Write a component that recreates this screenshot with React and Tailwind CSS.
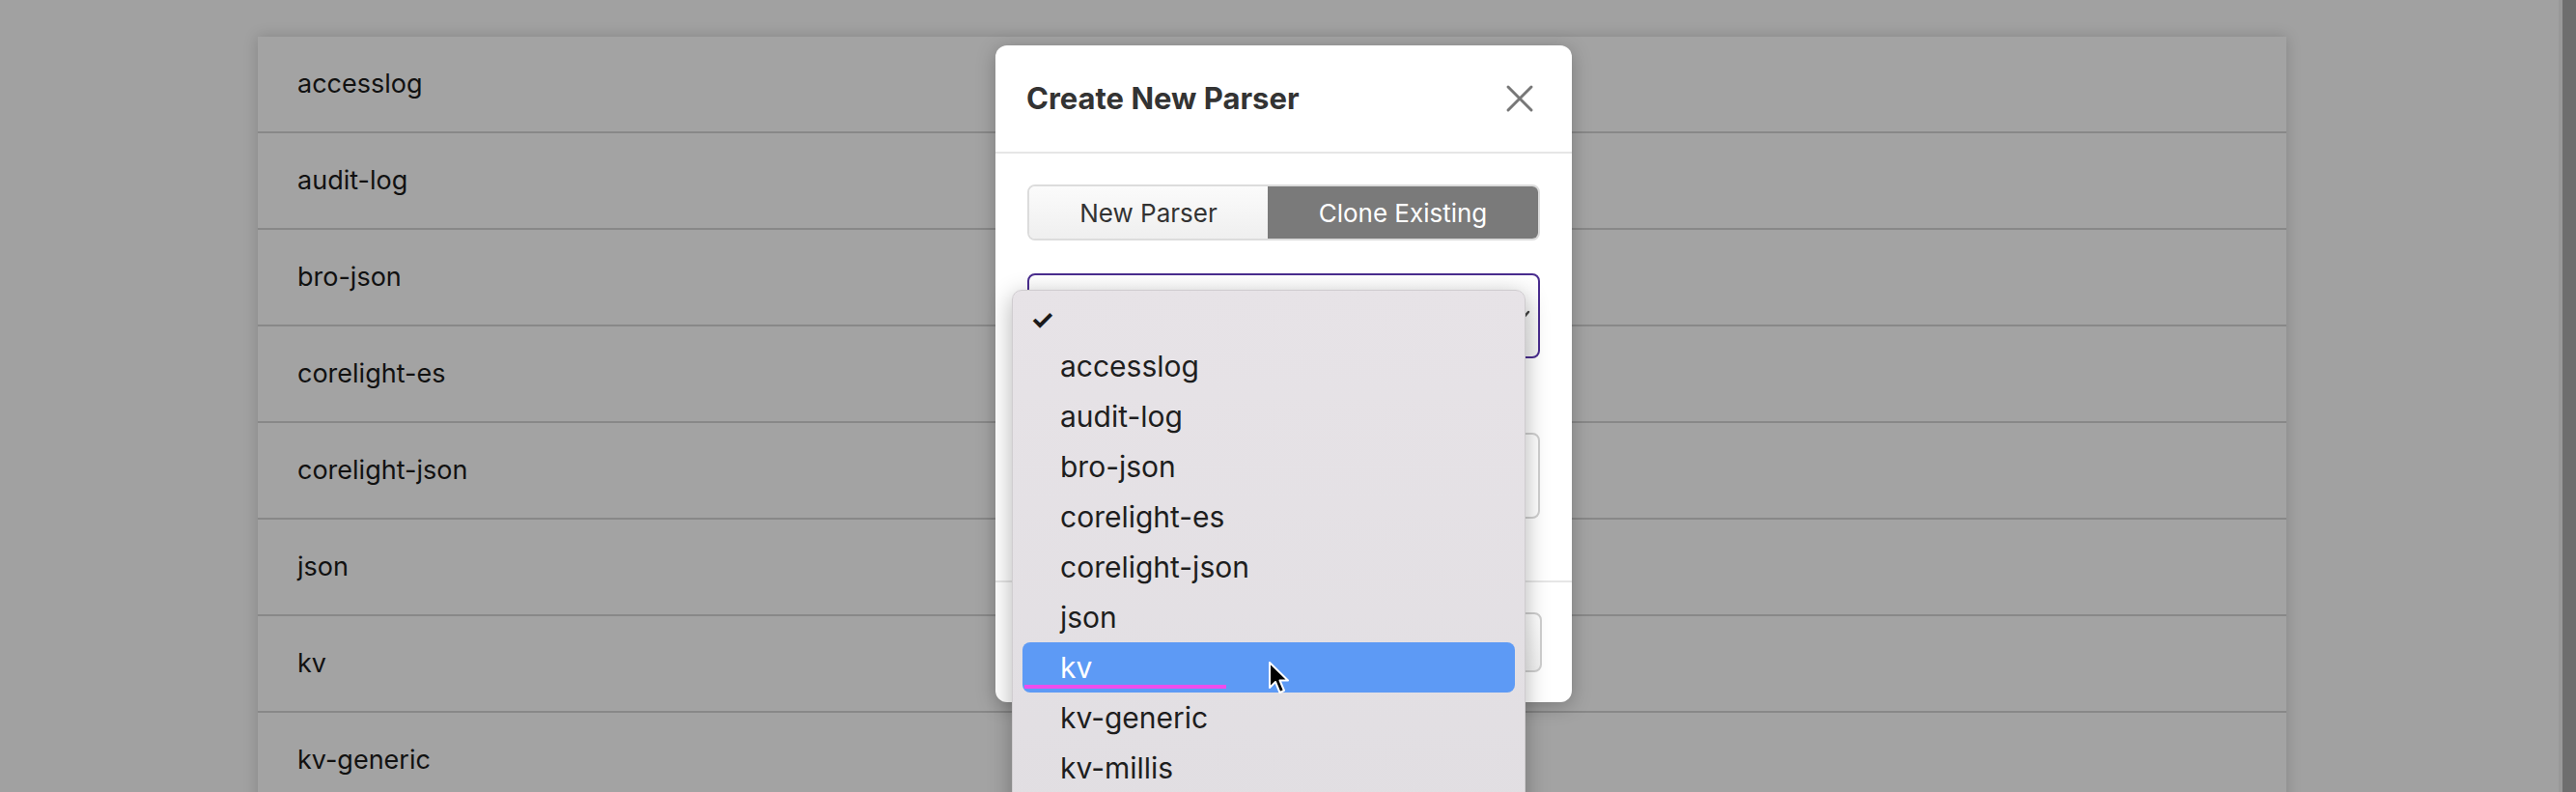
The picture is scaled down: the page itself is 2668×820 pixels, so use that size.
import React from 'react'

// parsers shown in the background list
const parsers = ['accesslog', 'audit-log', 'bro-json', 'corelight-es', 'corelight-json', 'json', 'kv', 'kv-generic']

// options in the open select popup
const options = ['accesslog', 'audit-log', 'bro-json', 'corelight-es', 'corelight-json', 'json', 'kv', 'kv-generic', 'kv-millis']

function CloseIcon() {
  return (
    <svg width="30" height="30" viewBox="0 0 30 30" fill="none" stroke="#777" strokeWidth="3" strokeLinecap="round">
      <path d="M3 3 L27 27 M27 3 L3 27" />
    </svg>
  )
}

function Cursor() {
  return (
    <svg width="24" height="36" viewBox="0 0 24 36">
      <path d="M2 2 L2 28 L8 22 L12.5 33 L17 31 L12.5 20.5 L21 20.5 Z" fill="#000" stroke="#fff" strokeWidth="2" strokeLinejoin="round" />
    </svg>
  )
}

export default function App() {
  return (
    <div className="relative h-[820px] w-[2668px] overflow-hidden bg-[#a1a1a1] font-['Inter','Liberation_Sans',sans-serif]">
      <div className="flex h-full">
        {/* background list */}
        <main className="flex-1 pl-[267px] pr-[282px] pt-[38px]">
          <div className="w-[2101px] bg-[#a3a3a3] shadow-[0_0_14px_rgba(0,0,0,0.18)]">
            {parsers.map((name) => (
              <div key={name} className="flex h-[100px] items-center border-b-2 border-[#888] pl-[41px] text-[27px] text-[#111]">
                {name}
              </div>
            ))}
          </div>
        </main>
        {/* scrollbar */}
        <div className="w-[18px] border-l-4 border-[#999] bg-[#6e6e6e]" />
      </div>

      {/* modal */}
      <div className="absolute left-[1031px] top-[47px] flex h-[680px] w-[597px] flex-col rounded-[12px] bg-white shadow-[0_4px_20px_rgba(0,0,0,0.25)]">
        <div className="flex h-[112px] items-center justify-between border-b-2 border-[#e6e6e6] pl-[32px] pr-[39px]">
          <h2 className="text-[31px] font-bold text-[#333]">Create New Parser</h2>
          <CloseIcon />
        </div>

        <div className="flex flex-1 flex-col px-[33px] pt-[32px]">
          <div className="flex h-[58px] overflow-hidden rounded-[8px] border-2 border-[#dcdcdc] text-[26px]">
            <div className="flex w-[247px] items-center justify-center bg-gradient-to-b from-[#fbfbfb] to-[#efefef] text-[#333]">New Parser</div>
            <div className="flex flex-1 items-center justify-center bg-[#7a7a7a] text-white">Clone Existing</div>
          </div>

          <div className="mt-[34px] flex h-[88px] items-center justify-end rounded-[8px] border-2 border-[#4a2d8f] bg-gradient-to-b from-white to-[#f4f4f4] pr-[8px]">
            <svg width="18" height="12" viewBox="0 0 18 12" fill="none" stroke="#444" strokeWidth="2.5" strokeLinecap="round">
              <path d="M2 2 L9 10 L16 2" />
            </svg>
          </div>

          <div className="mt-[77px] h-[89px] rounded-[8px] border-2 border-[#d0d0d0] bg-white" />
        </div>

        <div className="flex h-[126px] items-start justify-end border-t-2 border-[#e6e6e6] pr-[31px] pt-[31px]">
          <div className="h-[62px] w-[200px] rounded-[8px] border-2 border-[#cfcfcf] bg-gradient-to-b from-white to-[#f2f2f2]" />
        </div>
      </div>

      {/* open select popup */}
      <div className="absolute left-[1048px] top-[300px] h-[560px] w-[532px] overflow-hidden rounded-[10px] border border-[#cfcccf] bg-gradient-to-b from-[#e7e3e7] to-[#e1dee2] px-[10px] pt-[8px] shadow-[0_6px_24px_rgba(0,0,0,0.3)]">
        <div className="flex h-[44px] items-center pl-[8px] text-[28px] font-bold leading-none text-[#1a1a1a]">✓</div>
        {options.map((opt) =>
          opt === 'kv' ? (
            <div key={opt} className="relative flex h-[52px] items-center rounded-[8px] bg-[#5d9af5] pl-[39px] text-[30px] text-white">
              {opt}
              <div className="absolute left-[2px] top-[44px] h-[4px] w-[209px] bg-[#ee4cec]" />
            </div>
          ) : (
            <div key={opt} className="flex h-[52px] items-center pl-[39px] text-[30px] text-[#1e1e1e]">
              {opt}
            </div>
          )
        )}
      </div>

      {/* mouse pointer */}
      <div className="absolute left-[1313px] top-[684px]">
        <Cursor />
      </div>
    </div>
  )
}
